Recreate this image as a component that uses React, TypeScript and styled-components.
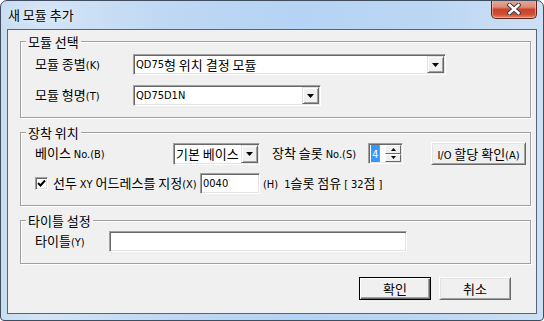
import React from 'react'
import styled, { createGlobalStyle } from 'styled-components'

const GlobalStyle = createGlobalStyle`
	html, body {
		margin: 0;
		padding: 0;
		background: #ffffff;
	}
	body {
		font-family: "Noto Sans CJK KR", "Liberation Sans", sans-serif;
		font-size: 13px;
		color: #000;
	}
	* {
		box-sizing: border-box;
	}
`

const Window = styled.div`
	width: 544px;
	height: 321px;
	display: flex;
	flex-direction: column;
	border: 1px solid #3f4d5f;
	border-radius: 7px 7px 4px 4px;
	overflow: hidden;
	background: linear-gradient(
		90deg,
		#c9ddf2 0%,
		#d3e4f6 8%,
		#bfd8f3 30%,
		#b5d3f4 55%,
		#bcd7f3 80%,
		#cde0f4 100%
	);
`

const TitleBar = styled.div`
	height: 28px;
	flex: none;
	display: flex;
	align-items: flex-start;
	justify-content: space-between;
	padding: 0 6px 0 7px;
`

const Title = styled.div`
	line-height: 28px;
	text-shadow: 0 0 6px rgba(255, 255, 255, 0.9);
`

const CloseButton = styled.div`
	width: 46px;
	height: 19px;
	margin-top: -1px;
	display: flex;
	align-items: center;
	justify-content: center;
	border: 1px solid #5e2419;
	border-top: none;
	border-radius: 0 0 5px 5px;
	background: linear-gradient(
		#e8ab9a 0%,
		#dc8a75 40%,
		#c8432a 52%,
		#cf4f34 80%,
		#e0866b 100%
	);
	box-shadow: inset 0 0 0 1px rgba(255, 210, 200, 0.5);
`

const Client = styled.div`
	flex: 1;
	display: flex;
	flex-direction: column;
	margin: 0 6px 6px;
	border: 1px solid #55657a;
	background: #f0f0f0;
	padding: 4px 5px 11px 12px;
`

const Group = styled.fieldset`
	margin: 0;
	padding: 0;
	min-width: 0;
	border: 1px solid #a0a0a0;
	box-shadow: inset 1px 1px 0 #ffffff, 1px 1px 0 #ffffff;

	& + & {
		margin-top: 7px;
	}
`

const Legend = styled.legend`
	margin-left: 5px;
	padding: 0 2px;
	line-height: 15px;
	background: #f0f0f0;
`

const GroupBody = styled.div<{ $top: number; $gap: number }>`
	display: flex;
	flex-direction: column;
	gap: ${(p) => p.$gap}px;
	padding: ${(p) => p.$top}px 8px 11px 14px;
`

const Row = styled.div<{ $h: number }>`
	height: ${(p) => p.$h}px;
	display: flex;
	align-items: center;
	white-space: nowrap;
`

const Label = styled.span<{ $w?: number; $ml?: number }>`
	flex: none;
	width: ${(p) => (p.$w ? `${p.$w}px` : 'auto')};
	margin-left: ${(p) => p.$ml ?? 0}px;
	line-height: 15px;
`

const En = styled.span`
	font-family: "DejaVu Sans Condensed", "Liberation Sans", sans-serif;
	font-size: 11px;
`

const Sunken = styled.div<{ $w: number; $h?: number }>`
	flex: none;
	width: ${(p) => p.$w}px;
	height: ${(p) => p.$h ?? 21}px;
	display: flex;
	align-items: stretch;
	padding: 1px;
	background: #ffffff;
	border: 1px solid;
	border-color: #a0a0a0 #ffffff #ffffff #a0a0a0;
	box-shadow: inset 1px 1px 0 #696969, inset -1px -1px 0 #e3e3e3;
`

const FieldText = styled.span`
	flex: 1;
	display: flex;
	align-items: center;
	padding-left: 1px;
	overflow: hidden;
	white-space: pre;
`

const DropButton = styled.span`
	width: 17px;
	flex: none;
	display: flex;
	align-items: center;
	justify-content: center;
	background: #f0f0f0;
	border: 1px solid;
	border-color: #e3e3e3 #696969 #696969 #e3e3e3;
	box-shadow: inset 1px 1px 0 #ffffff, inset -1px -1px 0 #a0a0a0;
`

const SpinButtons = styled.div`
	width: 16px;
	flex: none;
	display: flex;
	flex-direction: column;
`

const SpinButton = styled.span`
	flex: 1;
	display: flex;
	align-items: center;
	justify-content: center;
	background: #f0f0f0;
	border: 1px solid;
	border-color: #ffffff #696969 #696969 #ffffff;
`

const Selected = styled.span`
	background: #3399ff;
	color: #ffffff;
	line-height: 17px;
	padding: 0 1px;
	border-right: 1px solid #e8801c;
`

const PushButton = styled.button<{ $w: number; $default?: boolean; $ml?: number }>`
	flex: none;
	width: ${(p) => p.$w}px;
	height: 23px;
	margin-left: ${(p) => p.$ml ?? 0}px;
	padding: 0;
	font: inherit;
	color: #000;
	background: #f0f0f0;
	white-space: nowrap;
	border: 1px solid;
	border-color: ${(p) =>
		p.$default ? '#000000' : '#ffffff #696969 #696969 #ffffff'};
	box-shadow: ${(p) =>
		p.$default
			? 'inset 1px 1px 0 #ffffff, inset -1px -1px 0 #696969, inset -2px -2px 0 #a0a0a0'
			: 'inset 1px 1px 0 #e3e3e3, inset -1px -1px 0 #a0a0a0'};
`

const CheckBox = styled.span`
	flex: none;
	width: 13px;
	height: 13px;
	margin-right: 5px;
	display: flex;
	align-items: center;
	justify-content: center;
	background: #ffffff;
	border: 1px solid;
	border-color: #a0a0a0 #ffffff #ffffff #a0a0a0;
	box-shadow: inset 1px 1px 0 #696969, inset -1px -1px 0 #e3e3e3;
`

const CheckLabel = styled.span`
	flex: none;
	width: 165px;
	display: flex;
	align-items: center;
	line-height: 15px;
`

const ButtonRow = styled.div`
	display: flex;
	justify-content: flex-end;
	gap: 8px;
	margin-top: 13px;
	padding-right: 20px;
`

// latin runs are drawn in a smaller, tahoma-like face; hangul stays in the CJK font
const Txt = ({ children }: { children: string }) => (
	<>
		{children.split(/([A-Za-z0-9()[\]./]+)/).map((part, i) =>
			i % 2 ? <En key={i}>{part}</En> : part
		)}
	</>
)

const Arrow = ({ w = 7 }: { w?: number }) => (
	<svg width={w} height={4} viewBox={`0 0 ${w} 4`}>
		<polygon points={`0,0 ${w},0 ${w / 2},4`} fill="#000" />
	</svg>
)

const SmallArrow = ({ up }: { up?: boolean }) => (
	<svg width={5} height={3} viewBox="0 0 5 3">
		<polygon points={up ? '2.5,0 5,3 0,3' : '0,0 5,0 2.5,3'} fill="#000" />
	</svg>
)

const Combo = ({ w, h, text }: { w: number; h?: number; text: string }) => (
	<Sunken $w={w} $h={h}>
		<FieldText>
			<Txt>{text}</Txt>
		</FieldText>
		<DropButton>
			<Arrow />
		</DropButton>
	</Sunken>
)

const App: React.FC = () => {
	return (
		<>
			<GlobalStyle />
			<Window>
				<TitleBar>
					<Title>새 모듈 추가</Title>
					<CloseButton>
						<svg width="14" height="12" viewBox="0 0 14 12">
							<path
								d="M2.5 2 L11.5 10 M11.5 2 L2.5 10"
								stroke="#3a3f47"
								strokeWidth="4.4"
								strokeLinecap="square"
							/>
							<path
								d="M2.5 2 L11.5 10 M11.5 2 L2.5 10"
								stroke="#ffffff"
								strokeWidth="2.4"
								strokeLinecap="square"
							/>
						</svg>
					</CloseButton>
				</TitleBar>
				<Client>
					<Group>
						<Legend>모듈 선택</Legend>
						<GroupBody $top={5} $gap={10}>
							<Row $h={21}>
								<Label $w={98}>
									<Txt>모듈 종별(K)</Txt>
								</Label>
								<Combo w={313} text="QD75형 위치 결정 모듈" />
							</Row>
							<Row $h={21}>
								<Label $w={98}>
									<Txt>모듈 형명(T)</Txt>
								</Label>
								<Combo w={188} text="QD75D1N" />
							</Row>
						</GroupBody>
					</Group>

					<Group>
						<Legend>장착 위치</Legend>
						<GroupBody $top={2} $gap={8}>
							<Row $h={23}>
								<Label $w={138}>
									<Txt>베이스 No.(B)</Txt>
								</Label>
								<Combo w={87} h={22} text="기본 베이스" />
								<Label $w={96} $ml={12}>
									<Txt>장착 슬롯 No.(S)</Txt>
								</Label>
								<Sunken $w={35}>
									<FieldText>
										<Selected>
											<En>4</En>
										</Selected>
									</FieldText>
									<SpinButtons>
										<SpinButton>
											<SmallArrow up />
										</SpinButton>
										<SpinButton>
											<SmallArrow />
										</SpinButton>
									</SpinButtons>
								</Sunken>
								<PushButton $w={95} $ml={28}>
									<Txt>I/O 할당 확인(A)</Txt>
								</PushButton>
							</Row>
							<Row $h={21}>
								<CheckLabel>
									<CheckBox>
										<svg width="9" height="9" viewBox="0 0 9 9">
											<polyline
												points="1,4 3.5,6.5 8,1.5"
												fill="none"
												stroke="#000"
												strokeWidth="2"
											/>
										</svg>
									</CheckBox>
									<span>
										<Txt>선두 XY 어드레스를 지정(X)</Txt>
									</span>
								</CheckLabel>
								<Sunken $w={60}>
									<FieldText>
										<En>0040</En>
									</FieldText>
								</Sunken>
								<Label $ml={3}>
									<Txt>(H)</Txt>
								</Label>
								<Label $ml={6}>
									<Txt>1슬롯 점유 [ 32점 ]</Txt>
								</Label>
							</Row>
						</GroupBody>
					</Group>

					<Group>
						<Legend>타이틀 설정</Legend>
						<GroupBody $top={3} $gap={0}>
							<Row $h={21}>
								<Label $w={74}>
									<Txt>타이틀(Y)</Txt>
								</Label>
								<Sunken $w={298}>
									<FieldText />
								</Sunken>
							</Row>
						</GroupBody>
					</Group>

					<ButtonRow>
						<PushButton $w={72} $default>
							확인
						</PushButton>
						<PushButton $w={72}>취소</PushButton>
					</ButtonRow>
				</Client>
			</Window>
		</>
	)
}

export default App
